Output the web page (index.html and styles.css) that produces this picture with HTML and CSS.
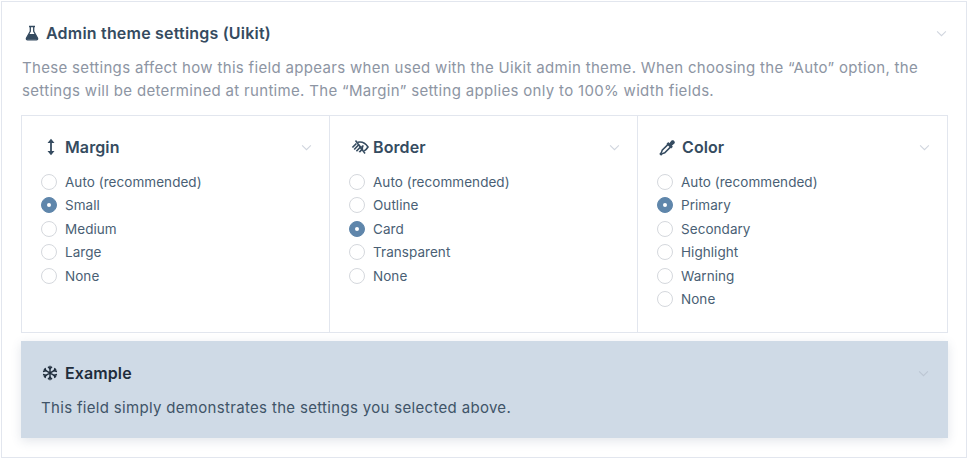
FILE: index.html
```html
<!DOCTYPE html>
<html lang="en">
<head>
<meta charset="utf-8">
<title>Admin theme settings (Uikit)</title>
<link rel="stylesheet" href="styles.css">
</head>
<body>
<section class="panel">
  <header class="head">
    <svg class="icon" viewBox="0 0 16 16"><path d="M5 1.500h6M6.300 1.500v4.800L2.500 13a1.200 1.200 0 0 0 1 1.800h9a1.200 1.200 0 0 0 1-1.800L9.700 6.300V1.500" fill="none" stroke="currentColor" stroke-width="1.300"/><path d="M4.800 9h6.400l3 5.500H1.800z" fill="currentColor"/></svg>
    <h2 class="title">Admin theme settings (Uikit)</h2>
    <svg class="chev" viewBox="0 0 12 8"><path d="M1 1.500l5 5 5-5" fill="none" stroke="currentColor" stroke-width="1.200"/></svg>
  </header>
  <p class="desc">These settings affect how this field appears when used with the Uikit admin theme. When choosing the “Auto” option, the settings will be determined at runtime. The “Margin” setting applies only to 100% width fields.</p>
  <div class="grid">
    <div class="col">
      <div class="col-head">
        <svg class="icon icon-margin" viewBox="0 0 10 18"><path d="M5 2v14" stroke="currentColor" stroke-width="1.800"/><path d="M1.500 5L5 .8 8.500 5zM1.500 13L5 17.200 8.500 13z" fill="currentColor"/></svg>
        <h3 class="col-title">Margin</h3>
        <svg class="chev" viewBox="0 0 12 8"><path d="M1 1.500l5 5 5-5" fill="none" stroke="currentColor" stroke-width="1.200"/></svg>
      </div>
      <ul class="opts">
        <li><span class="radio"></span>Auto (recommended)</li>
        <li><span class="radio on"></span>Small</li>
        <li><span class="radio"></span>Medium</li>
        <li><span class="radio"></span>Large</li>
        <li><span class="radio"></span>None</li>
      </ul>
    </div>
    <div class="col">
      <div class="col-head">
        <svg class="icon icon-border" viewBox="0 0 18 16"><path d="M6.500 3.300C7.300 3.100 8.200 3 9 3c3.200 0 6 2 8 5-1 1.600-2.300 3-3.800 3.900M9.500 9.500a2.500 2.500 0 0 0 2.200-3.200" fill="none" stroke="currentColor" stroke-width="1.600"/><path d="M.8 8l4-4 1.200 1.100-4 4zM2.600 10l5-5.300 1.200 1.100-5 5.200zM4.800 11.800l5-5.400 1.200 1.100-5 5.300zM7.500 13l3.800-4.200 1.200 1.100-3.300 3.700z" fill="currentColor"/><path d="M4.500 1.500l9.500 13" stroke="currentColor" stroke-width="1.500"/></svg>
        <h3 class="col-title">Border</h3>
        <svg class="chev" viewBox="0 0 12 8"><path d="M1 1.500l5 5 5-5" fill="none" stroke="currentColor" stroke-width="1.200"/></svg>
      </div>
      <ul class="opts">
        <li><span class="radio"></span>Auto (recommended)</li>
        <li><span class="radio"></span>Outline</li>
        <li><span class="radio on"></span>Card</li>
        <li><span class="radio"></span>Transparent</li>
        <li><span class="radio"></span>None</li>
      </ul>
    </div>
    <div class="col">
      <div class="col-head">
        <svg class="icon icon-color" viewBox="0 0 16 16"><path d="M8.800 4.800L3 10.600 2.300 12.700 1.200 14l.8.800 1.300-1.100 2.100-.7 5.800-5.800" fill="none" stroke="currentColor" stroke-width="1.400"/><path d="M7 4.600l1.700-1.700 1 1L11.800 1.500c1.500-1.500 4.200 1.200 2.700 2.700L12.100 6.300l1 1-1.700 1.700z" fill="currentColor"/></svg>
        <h3 class="col-title">Color</h3>
        <svg class="chev" viewBox="0 0 12 8"><path d="M1 1.500l5 5 5-5" fill="none" stroke="currentColor" stroke-width="1.200"/></svg>
      </div>
      <ul class="opts">
        <li><span class="radio"></span>Auto (recommended)</li>
        <li><span class="radio on"></span>Primary</li>
        <li><span class="radio"></span>Secondary</li>
        <li><span class="radio"></span>Highlight</li>
        <li><span class="radio"></span>Warning</li>
        <li><span class="radio"></span>None</li>
      </ul>
    </div>
  </div>
  <div class="example">
    <div class="col-head ex-head">
      <svg class="icon icon-snow" viewBox="0 0 16 16"><g stroke="currentColor" stroke-width="1.400" fill="none"><path d="M8 .8v14.400M1.800 4.400l12.400 7.200M1.800 11.600l12.400-7.200"/><path d="M6 1.800l2 2 2-2M6 14.200l2-2 2 2M1 6.500l2.800-.8-.8-2.700M15 6.500l-2.800-.8.8-2.700M1 9.500l2.800.8-.8 2.700M15 9.500l-2.800.8.8 2.700"/></g></svg>
      <h3 class="col-title">Example</h3>
      <svg class="chev" viewBox="0 0 12 8"><path d="M1 1.500l5 5 5-5" fill="none" stroke="currentColor" stroke-width="1.200"/></svg>
    </div>
    <p class="ex-text">This field simply demonstrates the settings you selected above.</p>
  </div>
</section>
</body>
</html>
```
FILE: styles.css
```css
* { box-sizing: border-box; }
html, body { margin: 0; padding: 0; }
body {
  width: 968px;
  height: 459px;
  background: #fff;
  font-family: Inter, "Liberation Sans", sans-serif;
  color: #354b60;
  overflow: hidden;
  padding: 1px;
}
.panel {
  width: 966px;
  height: 457px;
  border: 1px solid #e2e6ee;
  padding: 21px 19px 0 19px;
}
.head { display: flex; align-items: center; height: 20px; padding-left: 3px; }
.icon { width: 16px; height: 16px; flex: none; color: #354b60; }
.title { margin: 0 0 0 6px; font-size: 16px; font-weight: 600; line-height: 20px; flex: 1; letter-spacing: .2px; }
.chev { width: 11px; height: 7px; color: #d0d5de; flex: none; }
.desc { margin: 13px 0 0 1px; width: 915px; font-size: 15px; line-height: 23px; color: #8d95a3; letter-spacing: .32px; }
.grid {
  display: grid;
  grid-template-columns: 308px 308px 309px;
  margin-top: 13px;
  height: 218px;
  border: 1px solid #e2e6ee;
  width: 927px;
}
.col { padding: 20px 17px 0 19px; border-right: 1px solid #e2e6ee; }
.col:last-child { border-right: 0; }
.col-head { display: flex; align-items: center; height: 22px; }
.col-title { margin: 0 0 0 7px; flex: 1; font-size: 16px; font-weight: 600; line-height: 22px; letter-spacing: .1px; }
.icon-margin { width: 10px; height: 18px; margin-left: 5px; margin-right: 2px; }
.icon-border { width: 18px; height: 16px; margin-left: 2px; margin-right: -3px; }
.icon-color { width: 17px; height: 17px; margin-left: 2px; margin-right: -1px; }
.icon-snow { width: 16px; height: 16px; margin-left: 2px; }
.opts { list-style: none; margin: 12.3px 0 0; padding: 0; }
.opts li { display: flex; align-items: center; height: 23.4px; font-size: 13.5px; letter-spacing: .05px; color: #4a5f75; }
.radio {
  width: 16px; height: 16px; border-radius: 50%;
  border: 1px solid #d5d8dd; background: #fff;
  margin-right: 8px; flex: none;
}
.radio.on { background: #5f86ab; border-color: #5f86ab; position: relative; }
.radio.on::after {
  content: ""; position: absolute; left: 5px; top: 5px;
  width: 4px; height: 4px; border-radius: 50%; background: #fff;
}
.example {
  width: 927px;
  height: 97px;
  margin-top: 8px;
  background: #cfdae6;
  padding: 21px 19px 0 19px;
  box-shadow: 0 3px 10px rgba(60, 80, 110, .14);
}
.ex-head { height: 22px; color: #1f2d3c; }
.ex-head .icon { color: #1f2d3c; }
.ex-head .chev { color: #bcc6d3; }
.ex-text { margin: 13px 0 0 1px; font-size: 15px; line-height: 22px; letter-spacing: .32px; color: #405468; }
```
